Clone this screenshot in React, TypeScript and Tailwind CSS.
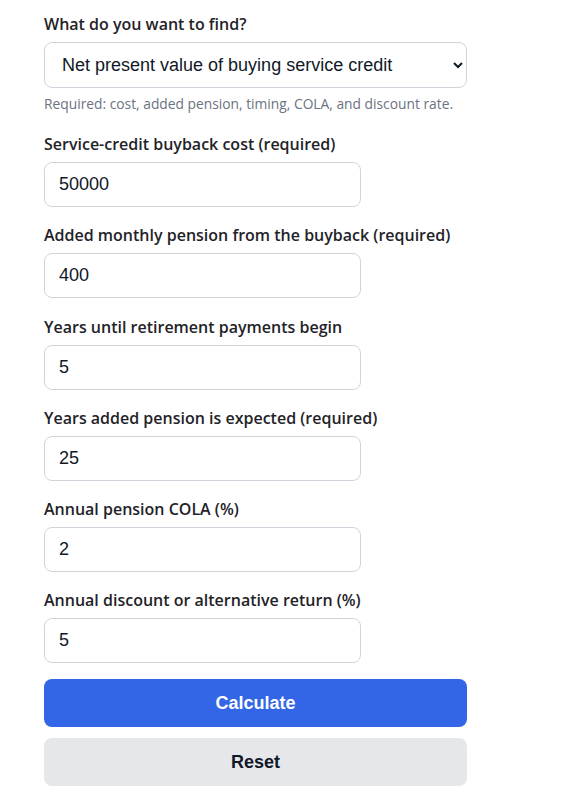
import { useState } from "react";

const fields = [
  { id: "cost", label: "Service-credit buyback cost (required)", value: "50000" },
  { id: "pension", label: "Added monthly pension from the buyback (required)", value: "400" },
  { id: "years", label: "Years until retirement payments begin", value: "5" },
  { id: "duration", label: "Years added pension is expected (required)", value: "25" },
  { id: "cola", label: "Annual pension COLA (%)", value: "2" },
  { id: "discount", label: "Annual discount or alternative return (%)", value: "5" },
];

export default function App() {
  const [values, setValues] = useState<Record<string, string>>(
    Object.fromEntries(fields.map((f) => [f.id, f.value]))
  );

  return (
    <div className="min-h-screen bg-white px-11 pt-3 font-['Open_Sans',sans-serif] text-[#1f2328]">
      <form className="w-[423px]" onSubmit={(e) => e.preventDefault()}>
        <label htmlFor="target" className="block text-base leading-6 font-semibold">
          What do you want to find?
        </label>
        <select
          id="target"
          className="mt-1.5 h-[46px] w-full rounded-lg border border-[#d1d5db] bg-white pl-[13px] pr-2 font-['Liberation_Sans',Arial,sans-serif] text-[18px] text-[#111827]"
          defaultValue="npv"
        >
          <option value="npv">Net present value of buying service credit</option>
          <option value="breakeven">Break-even years for the buyback</option>
        </select>
        <p className="mt-1.5 text-[13.8px] leading-5 text-[#6b7280]">
          Required: cost, added pension, timing, COLA, and discount rate.
        </p>

        {/* input rows */}
        <div className="mt-[18px] flex flex-col gap-[16.25px]">
          {fields.map((f) => (
            <div key={f.id}>
              <label htmlFor={f.id} className="block text-base leading-6 font-semibold">
                {f.label}
              </label>
              <input
                id={f.id}
                type="text"
                value={values[f.id]}
                onChange={(e) => setValues({ ...values, [f.id]: e.target.value })}
                className="mt-1.5 h-[45px] w-3/4 rounded-lg border border-[#d1d5db] bg-white px-[14px] font-['Liberation_Sans',Arial,sans-serif] text-[18px] text-[#111827] outline-none"
              />
            </div>
          ))}
        </div>

        <button
          type="submit"
          className="mt-4 h-12 w-full rounded-lg bg-[#3366e6] font-['Liberation_Sans',Arial,sans-serif] text-[18px] font-bold text-white"
        >
          Calculate
        </button>
        <button
          type="button"
          onClick={() => setValues(Object.fromEntries(fields.map((f) => [f.id, f.value])))}
          className="mt-[11px] h-12 w-full rounded-lg bg-[#e5e7eb] font-['Liberation_Sans',Arial,sans-serif] text-[18px] font-bold text-[#111827]"
        >
          Reset
        </button>
      </form>
    </div>
  );
}
